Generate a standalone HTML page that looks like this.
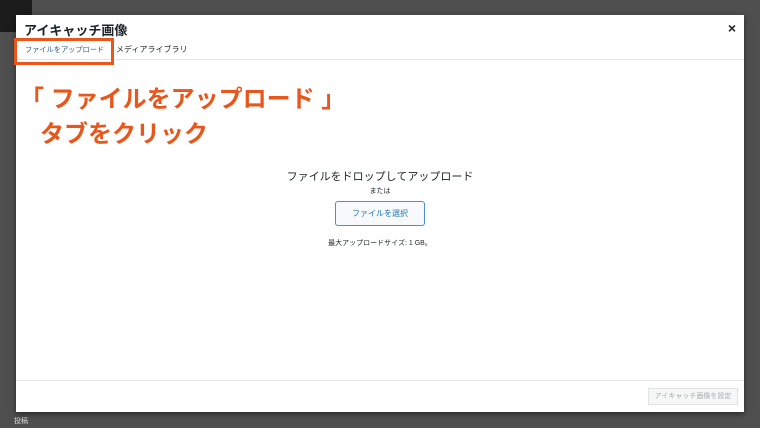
<!DOCTYPE html>
<html><head><meta charset="utf-8"><style>
*{margin:0;padding:0;box-sizing:border-box}
body{width:760px;height:428px;overflow:hidden;background:#4f4f4f;font-family:"Liberation Sans","Noto Sans CJK JP",sans-serif;position:relative}
.wp{position:absolute;left:0;top:0;width:32px;height:32px;background:#1c1c1c}
.modal{position:absolute;left:16px;top:15px;width:728px;height:397px;background:#fff;box-shadow:0 2px 6px rgba(0,0,0,.5)}
.title{position:absolute;left:8px;top:5px;font-size:13px;font-weight:bold;color:#1d2327}
.close{position:absolute;right:8px;top:5px;font-size:14px;font-weight:bold;color:#222}
.tabs{position:absolute;left:0;top:44px;width:728px;border-top:1px solid #e6e6e6}
.t1{position:absolute;left:9px;top:30px;font-size:7.2px;color:#2c5d87;white-space:nowrap}
.t2{position:absolute;left:100px;top:29px;font-size:8px;color:#1d2327;white-space:nowrap}
.box{position:absolute;left:14px;top:38px;width:100px;height:27px;border:3px solid #e8561c}
.o{position:absolute;color:#e8561c;font-weight:bold;font-size:24px;white-space:nowrap}
.c{position:absolute;left:0;width:728px;text-align:center;color:#1d2327}
.btn{position:absolute;left:319px;top:186px;width:90px;height:25px;border:1px solid #4f8fc7;border-radius:3px;background:#f7f9fb;color:#2271b1;font-size:8px;text-align:center;line-height:23px}
.foot{position:absolute;left:0;top:365px;width:728px;border-top:1px solid #e6e6e6}
.sb{position:absolute;left:632px;top:373px;width:90px;height:17px;border:1px solid #e2e2e2;background:#f6f7f7;color:#a7aaad;font-size:7px;text-align:center;line-height:15px}
</style></head><body>
<div class="wp"></div>
<div style="position:absolute;left:14px;top:416px;font-size:7px;color:#ddd">投稿</div>
<div class="modal">
<div class="title">アイキャッチ画像</div>
<div class="close">×</div>
<div class="t1">ファイルをアップロード</div>
<div class="t2">メディアライブラリ</div>
<div class="tabs"></div>
<div class="c" style="top:153px;font-size:11px">ファイルをドロップしてアップロード</div>
<div class="c" style="top:171px;font-size:7px">または</div>
<div class="btn">ファイルを選択</div>
<div class="c" style="top:223px;font-size:7px">最大アップロードサイズ: 1 GB。</div>
<div class="foot"></div>
<div class="sb">アイキャッチ画像を設定</div>
</div>
<div class="box"></div>
<div class="o" style="left:20px;top:79px">「 ファイルをアップロード 」</div>
<div class="o" style="left:40px;top:114px">タブをクリック</div>
</body></html>
